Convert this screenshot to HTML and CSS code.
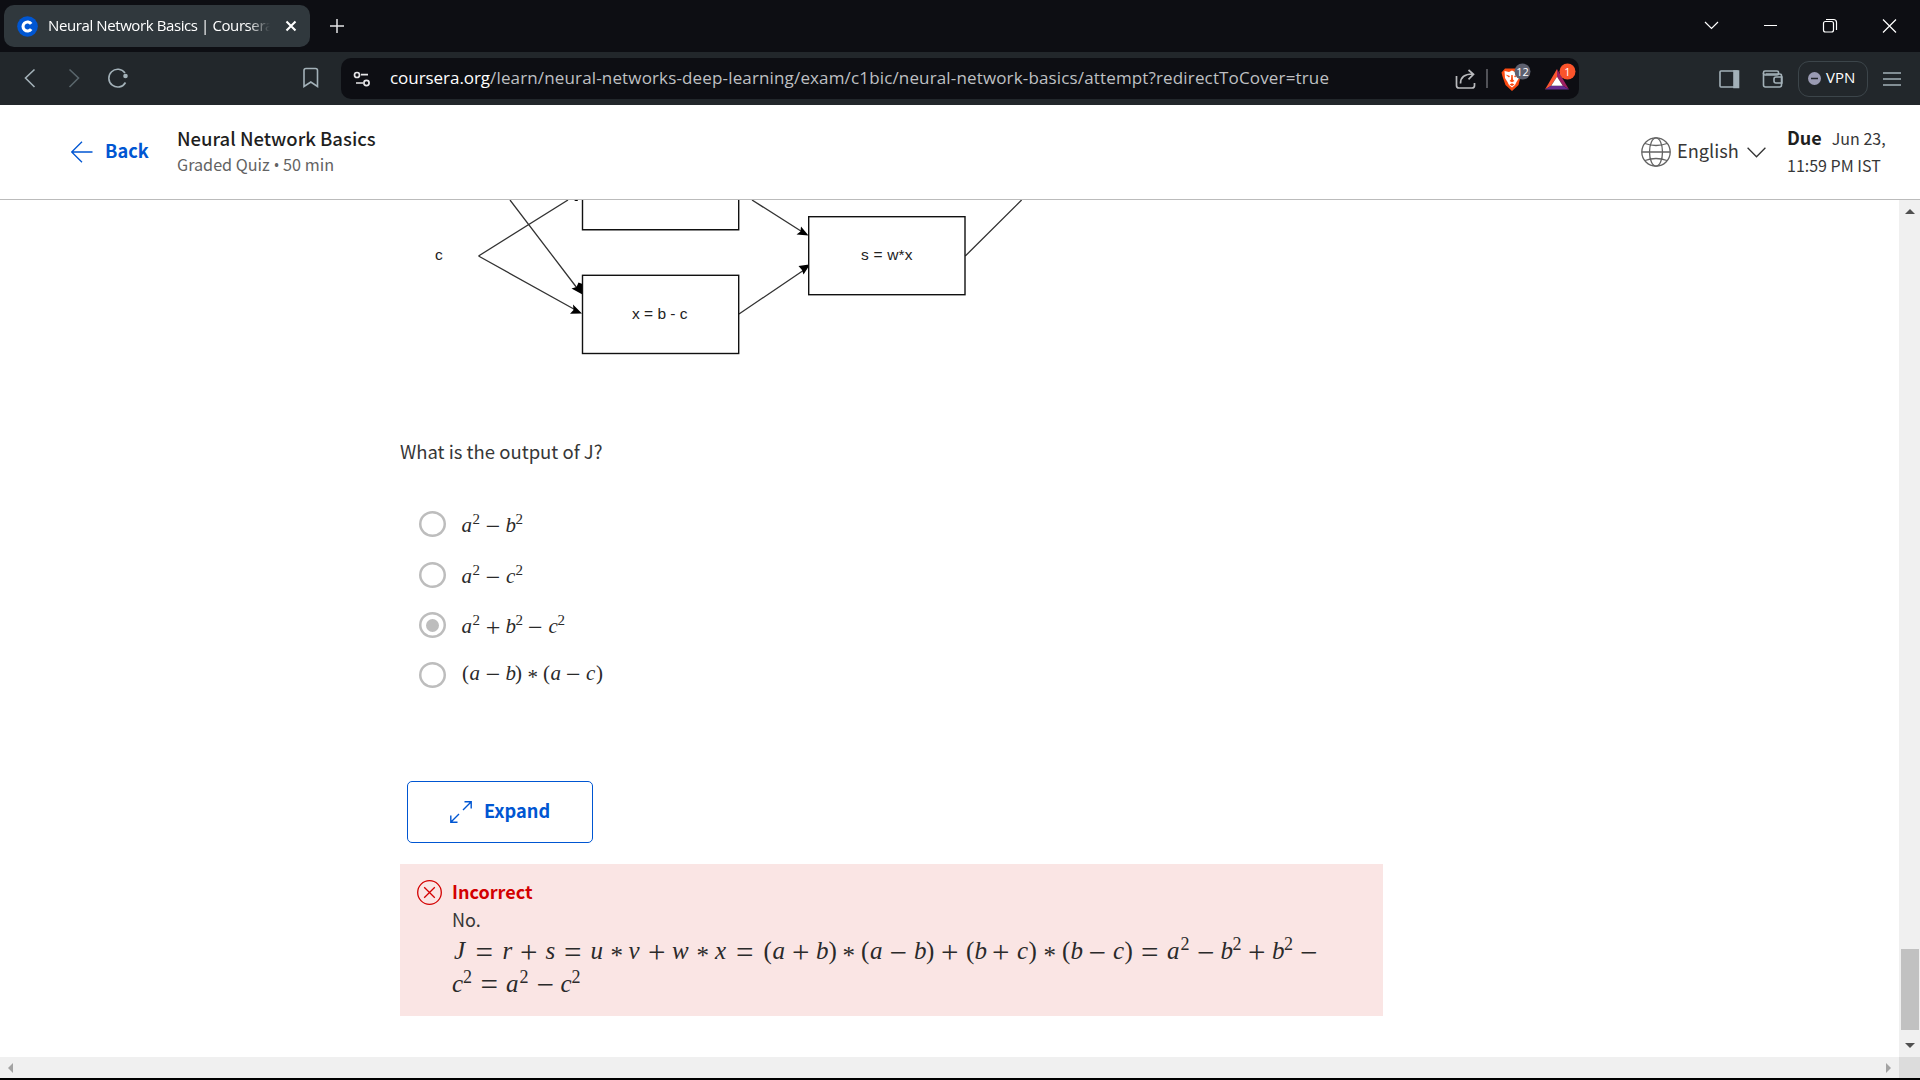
FILE: index.html
```html
<!DOCTYPE html>
<html lang="en">
<head>
<meta charset="utf-8">
<title>Neural Network Basics | Coursera</title>
<link rel="stylesheet" href="styles.css">
</head>
<body>
<div class="tabstrip">
  <div class="tab">
    <svg class="favicon" viewBox="0 0 21 21"><circle cx="10.5" cy="10.5" r="10.3" fill="#0056d2"/><path d="M14.2 7.9A4.5 4.5 0 1 0 14.2 13.1" fill="none" stroke="#fff" stroke-width="3.1"/></svg>
    <span class="tab-title">Neural Network Basics | Coursera</span>
    <svg class="tab-close" viewBox="0 0 12 12"><path d="M1.5 1.5l9 9M10.500 1.500l-9 9" stroke="#fff" stroke-width="2.1"/></svg>
  </div>
  <svg class="plus" viewBox="0 0 14 14"><path d="M7 0v14M0 7h14" stroke="#e4e4e6" stroke-width="1.5"/></svg>
  <svg class="window-controls" viewBox="1700 0 220 52" fill="none" stroke="#fff" stroke-width="1.2"><path d="M1705 22l6.500 6.500 6.500-6.500M1764 25.500h13M1883 19.500l13 13M1896 19.500l-13 13"/><rect x="1823.500" y="21.500" width="10" height="10.500" rx="2"/><path d="M1826 19.500h7.500q3 0 3 3v7.500"/></svg>
</div>
<div class="toolbar">
  <svg class="nav-icons" viewBox="0 52 341 53" fill="none" stroke="#a3b1b8" stroke-width="1.600"><path d="M34.500 69.500L25.500 78l9 9"/><path d="M69.500 69.500l9 8.500-9 9" stroke="#59656b"/><path d="M125 73A8.900 8.900 0 1 0 125.500 82.500"/><circle cx="125.500" cy="76" r="2.300" fill="#a3b1b8" stroke="none"/><path d="M304 70.500q0-2 2-2h9.500q2 0 2 2V86.500l-6.700-4.500-6.800 4.500z"/></svg>
  <div class="address">
    <svg class="site-icon" viewBox="353 69 18 18" fill="none" stroke="#e6e6e8" stroke-width="1.700"><circle cx="357" cy="74" r="2.500"/><path d="M361 73.700h7M356 82h7"/><circle cx="366.500" cy="82" r="2.600"/></svg>
    <span class="url"><b>coursera.org</b>/learn/neural-networks-deep-learning/exam/c1bic/neural-network-basics/attempt?redirectToCover=true</span>
    <svg class="address-icons" viewBox="1450 57 129 41"><g fill="none" stroke="#b9babd" stroke-width="1.700"><path d="M1456.500 75v9.500q0 2.500 2.500 2.500h13q2.500 0 2.500-2.500v-2.500"/><path d="M1460.500 82.500q0-9.500 12-9.500M1468.500 69l5 4.300-5 5"/></g><path d="M1487 68v19" stroke="#77797e" stroke-width="1.300"/>
    <path d="M1505 67.500h14l3 4-1.500 4-2 8.500-6.500 6-6.500-6-3-8.500-1-4z" fill="#fb4b12"/><path d="M1504.500 70l4.500 1 3-1.500 3 1.500 4.500-1-.5 7-2.500 4-1.500 3-3 2.500-3-2.500-1.500-3-2.500-4z" fill="#fff"/><path d="M1505.500 73.500l4.500 1.500-1 1.500zM1518.500 73.500l-4.500 1.500 1 1.500zM1511.300 74h1.400l.3 4.500 1.500 1.500-2.500 1.300-2.500-1.300 1.500-1.500zM1509.500 83.500l2.500-1.200 2.500 1.200-2.500 1.500z" fill="#fb4b12"/>
    <circle cx="1522.500" cy="70.500" r="8" fill="#5d606f"/><text class="badge" x="1522.500" y="74.500">12</text>
    <path d="M1557 68l-12 20.500 6-3.800 6-9z" fill="#fb5530"/><path d="M1557 68l12 20.500-6-3.800-6-9z" fill="#9e1f63"/><path d="M1545 88.500h24l-6-3.800h-12z" fill="#662d91"/><path d="M1557 75.700l-5.800 9h11.600z" fill="#fff"/>
    <circle cx="1567.500" cy="70.500" r="8" fill="#fb542b"/><text class="badge" x="1567.500" y="74.500">1</text></svg>
  </div>
  <svg class="side-icons" viewBox="1715 57 72 41" fill="none" stroke="#a3b1b8" stroke-width="1.600"><rect x="1720" y="70" width="18" height="16" rx="1"/><path d="M1734 70h4.500v16.500h-4.500z" fill="#a3b1b8"/><rect x="1763.500" y="70" width="15" height="4" rx="1.500"/><path d="M1763.500 72v12q0 2 2 2h14q2 0 2-2v-9.500q0-1.500-2-1.500h-14M1782 76h-6q-2 0-2 2v2q0 2 2 2h6z"/></svg>
  <div class="vpn"><svg viewBox="0 0 13 13"><circle cx="6.500" cy="6.500" r="6.500" fill="#9a9bb3"/><path d="M3 6.500h7" stroke="#22272c" stroke-width="1.500"/></svg><span>VPN</span></div>
  <svg class="menu" viewBox="0 0 18 14"><path d="M0 1h18M0 7h18M0 13h18" stroke="#a3b1b8" stroke-width="1.500"/></svg>
</div>
<header class="quiz-header">
  <svg class="back-arrow" viewBox="0 0 22 22"><path d="M21.500 11H1M11 .7L.7 11 11 21.300" fill="none" stroke="#0056d2" stroke-width="1.300"/></svg>
  <span class="back">Back</span>
  <div class="heading"><div class="quiz-title">Neural Network Basics</div><div class="quiz-sub">Graded Quiz <span class="bullet">•</span> 50 min</div></div>
  <svg class="globe" viewBox="0 0 30 30" fill="none" stroke="#636363" stroke-width="1.300"><circle cx="15" cy="15" r="14.200"/><ellipse cx="15" cy="15" rx="6.500" ry="14.200"/><path d="M.8 15h28.400M4 6.500q11 4 22 0M4 23.500q11-4 22 0"/></svg>
  <span class="language">English</span>
  <svg class="chevron" viewBox="0 0 19 11"><path d="M.6.800L9.500 9.800 18.400.800" fill="none" stroke="#333" stroke-width="1.300"/></svg>
  <div class="due"><div><b>Due</b><span class="date">Jun 23,</span></div><div><span class="time">11:59 PM IST</span></div></div>
</header>
<div class="viewport">
  <main>
    <svg class="diagram" viewBox="400 200 640 160">
      <g class="edges"><path d="M510 200L577 288M478.500 256L568 200M478.500 256l98 54.500M752 200l52 33M739 314l65-44M965.300 256L1021.600 200"/></g>
      <path d="M582.500 294.500l-11-6 5-1.500 2-4.500 4 1.500zM582 313.500l-12 .3 3.500-3.800-.5-5.500zM808.500 235.500l-12-1 4-3 .5-5zM809 266l-5.500 8.500-1.500-4.500-3.500-4 10.500-1.500zM574 200h4l-.5 1h-2z"/>
      <g class="nodes"><path d="M582.500 200v29.700H738.700V200"/><rect x="582.500" y="275.300" width="156.200" height="78.200"/><rect x="808.700" y="216.700" width="156.300" height="78"/></g>
      <text x="435" y="260">c</text>
      <text x="861" y="260" textLength="51.500">s = w*x</text>
      <text x="632" y="319" textLength="55.500">x = b - c</text>
    </svg>
    <p class="question">What is the output of J?</p>
    <div class="options">
      <div class="option"><i class="radio"></i><svg class="math" viewBox="458 499 160 50"><text y="531.700"><tspan x="461.500">a</tspan><tspan class="sup" x="472.500" y="524">2</tspan><tspan class="op" x="485.800" y="535">−</tspan><tspan x="505.500" y="531.700">b</tspan><tspan class="sup" x="515.500" y="524">2</tspan></text></svg></div>
      <div class="option"><i class="radio"></i><svg class="math" viewBox="458 549 160 50"><text y="581.700"><tspan x="461.500">a</tspan><tspan class="sup" x="472.500" y="573.500">2</tspan><tspan class="op" x="485.800" y="585">−</tspan><tspan x="506" y="581.700">c</tspan><tspan class="sup" x="515.500" y="573.500">2</tspan></text></svg></div>
      <div class="option"><i class="radio checked"></i><svg class="math" viewBox="458 600 160 50"><text y="633"><tspan x="461.500">a</tspan><tspan class="sup" x="472.500" y="624.500">2</tspan><tspan class="op" x="485.800" y="636">+</tspan><tspan x="505.500" y="633">b</tspan><tspan class="sup" x="515.500" y="624.500">2</tspan><tspan class="op" x="528" y="636">−</tspan><tspan x="548.500" y="633">c</tspan><tspan class="sup" x="557.500" y="624.500">2</tspan></text></svg></div>
      <div class="option"><i class="radio"></i><svg class="math" viewBox="458 650 160 50"><text y="680"><tspan class="rm" x="462">(</tspan><tspan x="469.500">a</tspan><tspan class="op" x="485.800" y="683">−</tspan><tspan x="505.500" y="680">b</tspan><tspan class="rm" x="515">)</tspan><tspan class="rm" x="527.500" y="684">*</tspan><tspan class="rm" x="543" y="680">(</tspan><tspan x="550.500">a</tspan><tspan class="op" x="566" y="683">−</tspan><tspan x="586" y="680">c</tspan><tspan class="rm" x="596">)</tspan></text></svg></div>
    </div>
    <div class="expand"><svg viewBox="0 0 22 22"><path d="M13 9l8-8M14.500.8h6.700v6.700M9 13l-8 8M.8 14.500v6.700h6.700" fill="none" stroke="#0056d2" stroke-width="1.400"/></svg><span>Expand</span></div>
    <section class="feedback">
      <svg class="wrong" viewBox="0 0 25 25"><path d="M7.200 7.200l10.600 10.600M17.800 7.200L7.200 17.800" stroke="#d30001" stroke-width="1.300"/><circle cx="12.500" cy="12.500" r="11.800" fill="none" stroke="#d30001" stroke-width="1.300"/></svg>
      <div class="feedback-body">
        <div class="verdict">Incorrect</div>
        <div class="no">No.</div>
        <svg class="math big" viewBox="452 934 900 72"><text y="959"><tspan x="454">J</tspan><tspan class="op" x="475.500" y="962.500">=</tspan><tspan x="502.500" y="959">r</tspan><tspan class="op" x="520" y="962.500">+</tspan><tspan x="545.500" y="959">s</tspan><tspan class="op" x="564" y="962.500">=</tspan><tspan x="590.500" y="959">u</tspan><tspan class="rm" x="610.500" y="964">*</tspan><tspan x="628.500" y="959">v</tspan><tspan class="op" x="648" y="962.500">+</tspan><tspan x="672" y="959">w</tspan><tspan class="rm" x="696.500" y="964">*</tspan><tspan x="715" y="959">x</tspan><tspan class="op" x="736" y="962.500">=</tspan><tspan class="rm" x="763.500" y="959">(</tspan><tspan x="772.500">a</tspan><tspan class="op" x="792" y="962.500">+</tspan><tspan x="816" y="959">b</tspan><tspan class="rm" x="828.500">)</tspan><tspan class="rm" x="842.500" y="964">*</tspan><tspan class="rm" x="861" y="959">(</tspan><tspan x="870">a</tspan><tspan class="op" x="889.500" y="962.500">−</tspan><tspan x="914" y="959">b</tspan><tspan class="rm" x="926">)</tspan><tspan class="op" x="941" y="962.500">+</tspan><tspan class="rm" x="966" y="959">(</tspan><tspan x="974.500">b</tspan><tspan class="op" x="992" y="962.500">+</tspan><tspan x="1017" y="959">c</tspan><tspan class="rm" x="1028.500">)</tspan><tspan class="rm" x="1043.500" y="964">*</tspan><tspan class="rm" x="1062" y="959">(</tspan><tspan x="1070.500">b</tspan><tspan class="op" x="1088.500" y="962.500">−</tspan><tspan x="1113" y="959">c</tspan><tspan class="rm" x="1124.500">)</tspan><tspan class="op" x="1141" y="962.500">=</tspan><tspan x="1167" y="959">a</tspan><tspan class="sup" x="1180.500" y="950">2</tspan><tspan class="op" x="1197" y="962.500">−</tspan><tspan x="1220.500" y="959">b</tspan><tspan class="sup" x="1232.500" y="950">2</tspan><tspan class="op" x="1248" y="962.500">+</tspan><tspan x="1272" y="959">b</tspan><tspan class="sup" x="1284" y="950">2</tspan><tspan class="op" x="1300" y="962.500">−</tspan></text>
        <text y="991.700"><tspan x="452">c</tspan><tspan class="sup" x="463" y="983">2</tspan><tspan class="op" x="480.500" y="995">=</tspan><tspan x="506" y="991.700">a</tspan><tspan class="sup" x="519.500" y="983">2</tspan><tspan class="op" x="536.500" y="995">−</tspan><tspan x="560.500" y="991.700">c</tspan><tspan class="sup" x="571.500" y="983">2</tspan></text></svg>
      </div>
    </section>
  </main>
  <div class="vscroll"><i class="up"></i><i class="thumb"></i><i class="down"></i></div>
</div>
<div class="hscroll"><i class="left"></i><i class="right"></i><i class="corner"></i></div>
</body>
</html>
```
FILE: styles.css
```css
* { box-sizing: border-box; }
body { margin: 0; width: 1920px; height: 1080px; overflow: hidden; display: flex; flex-direction: column; background: #000; color: #1f1f1f; font-family: "Noto Sans CJK SC", "Noto Sans", sans-serif; }
svg { display: block; flex: none; }
i { display: block; }

.tabstrip { height: 52px; flex: none; background: #0d0e13; display: flex; align-items: center; padding-left: 4px; font-family: "Open Sans", sans-serif; }
.tab { width: 306px; height: 42px; border-radius: 10px; background: #30383d; display: flex; align-items: center; padding-left: 13px; }
.favicon { width: 21px; height: 21px; }
.tab-title { width: 223px; padding-bottom: 2px; margin-left: 10px; overflow: hidden; white-space: nowrap; font-size: 15px; letter-spacing: -.4px; line-height: 24px; color: #fff; -webkit-mask-image: linear-gradient(90deg, #000 200px, transparent 222px); mask-image: linear-gradient(90deg, #000 200px, transparent 222px); }
.tab-close { width: 12px; height: 12px; margin-left: 14px; }
.plus { width: 14px; height: 14px; margin-left: 20px; }
.window-controls { width: 220px; height: 52px; margin-left: auto; }

.toolbar { height: 53px; flex: none; background: #22272b; display: flex; align-items: center; font-family: "Open Sans", sans-serif; }
.nav-icons { width: 341px; height: 53px; }
.address { width: 1238px; height: 41px; border-radius: 10px; background: #0d0e13; display: flex; align-items: center; padding-left: 12px; }
.site-icon { width: 18px; height: 18px; }
.url { flex: 1; margin-left: 19px; padding-bottom: 2px; white-space: nowrap; font-size: 17px; letter-spacing: .15px; line-height: 28px; color: #bfc0c3; }
.url b { font-weight: 400; letter-spacing: -.05px; color: #fff; }
.address-icons { width: 129px; height: 41px; }
.badge { font: 11px "Open Sans", sans-serif; fill: #fff; text-anchor: middle; }
.side-icons { width: 72px; height: 41px; margin-left: 136px; }
.vpn { width: 70px; height: 36px; margin-left: 11px; border: 1.5px solid #3c454a; border-radius: 11px; display: flex; align-items: center; padding-left: 9px; gap: 5px; font-size: 15px; color: #fff; }
.vpn svg { width: 13px; height: 13px; }
.vpn span { padding-bottom: 3px; }
.menu { width: 18px; height: 14px; margin-left: 15px; }

.quiz-header { height: 95px; flex: none; background: #fff; border-bottom: 1px solid #bbb; display: flex; align-items: center; padding-left: 71px; white-space: nowrap; }
.back-arrow { width: 22px; height: 22px; }
.back { width: 72px; margin-left: 12px; padding-bottom: 4px; font-size: 18.2px; font-weight: 600; color: #0056d2; flex: none; }
.heading { padding-bottom: 1px; margin-right: auto; flex: none; }
.quiz-title { font-size: 18.5px; line-height: 27px; font-weight: 500; }
.quiz-sub { font-size: 16.2px; line-height: 25px; color: #636363; }
.bullet { font-family: "Open Sans", sans-serif; }
.globe { width: 30px; height: 30px; }
.language { width: 70px; margin-left: 6px; padding-bottom: 4px; font-size: 18.2px; flex: none; }
.chevron { width: 19px; height: 11px; }
.due { width: 133px; margin-left: 21px; padding-bottom: 2px; font-size: 16px; line-height: 27px; flex: none; }
.due b { font-size: 18px; font-weight: 600; }
.date { margin-left: 10px; }
.language, .date, .time, .question, .no { color: #373737; }

.viewport { height: 857px; flex: none; background: #fff; display: flex; }
main { width: 1899px; padding-left: 400px; }
.diagram { width: 640px; height: 160px; }
.diagram text { font: 15.500px "Liberation Sans", sans-serif; fill: #222; }
.edges { fill: none; stroke: #333; stroke-width: 1.3; }
.nodes { fill: #fff; stroke: #111; stroke-width: 1.4; }
.question { margin: 76px 0 48px; font-size: 18.5px; line-height: 30px; }
.options { height: 201px; display: flex; flex-direction: column; padding-left: 19px; margin-top: -15px; }
.option { display: flex; align-items: center; height: 50px; }
.option:nth-child(2) { height: 51px; }
.radio { width: 27px; height: 26px; box-shadow: inset 0 0 0 2.500px #bdbdbd; border-radius: 50%; display: flex; align-items: center; justify-content: center; }
.checked::after { content: ""; width: 13px; height: 13px; border-radius: 50%; background: #bdbdbd; }
.math { width: 160px; height: 50px; margin-left: 12px; overflow: visible; }
.math text { font: italic 21px "Liberation Serif", serif; fill: #2a2a2a; }
.math .rm, .math .op, .math .sup { font-style: normal; }
.math .sup { font-size: 15px; }
.math .op { font-size: 26px; }
.expand { width: 186px; height: 62px; margin: 81px 0 21px 7px; border: 1.500px solid #0056d2; border-radius: 5px; display: flex; align-items: center; padding-left: 42px; gap: 12px; color: #0056d2; font-size: 18.2px; font-weight: 600; }
.expand svg { width: 22px; height: 22px; }
.expand span { padding-bottom: 4px; }
.feedback { width: 983px; height: 152px; background: #fae5e4; display: flex; padding: 16px 0 0 17px; }
.wrong { width: 25px; height: 25px; }
.feedback-body { margin-left: 10px; line-height: 28px; font-size: 18px; }
.verdict { margin-top: -3px; font-weight: 600; color: #d30001; }
.math.big { width: 900px; height: 72px; margin: 1px 0 0; }
.big text { font-size: 25px; }
.big .sup { font-size: 18px; }
.big .op { font-size: 31px; }

.vscroll { width: 21px; background: #f0f0f0; display: flex; flex-direction: column; align-items: center; }
.up, .down { border: 5px solid transparent; border-top: 0; border-bottom: 5px solid #505050; margin-top: 9px; }
.thumb { width: 18px; height: 81px; background: #c1c1c1; margin-top: 735px; }
.down { border-top: 5px solid #505050; border-bottom: 0; margin-top: 13px; }
.hscroll { height: 21px; flex: none; background: #f0f0f0; display: flex; align-items: center; }
.left, .right { border: 5px solid transparent; border-right-color: #a3a3a3; border-left: 0; margin-left: 8px; }
.right { border-left: 5px solid #a3a3a3; border-right: 0; margin-left: auto; margin-right: 8px; }
.corner { width: 21px; height: 21px; background: #dcdcdc; }
```
